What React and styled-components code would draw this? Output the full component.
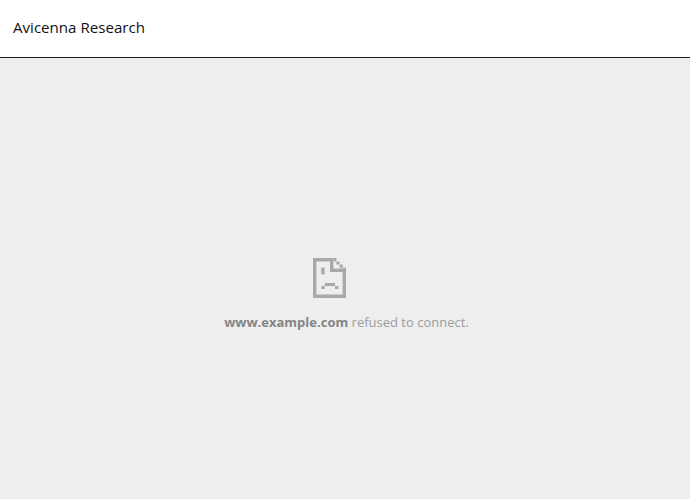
import React from "react";
import styled, { createGlobalStyle } from "styled-components";

const GlobalStyle = createGlobalStyle`
  html, body {
    margin: 0;
    padding: 0;
    height: 100%;
  }
  #root {
    height: 100%;
  }
`;

const Page = styled.div`
  display: flex;
  flex-direction: column;
  height: 499px;
  background: #fff;
  overflow: hidden;
`;

const Header = styled.header`
  display: flex;
  align-items: center;
  height: 58px;
  padding: 0 13px 3px;
  box-sizing: border-box;
  border-bottom: 1px solid #1c1c1c;
  background: #fff;
`;

const Title = styled.h1`
  margin: 0;
  font: 400 15.1px "Open Sans", sans-serif;
  color: #111;
`;

const Frame = styled.main`
  flex: 1;
  display: flex;
  flex-direction: column;
  align-items: center;
  padding: 200px 0 0 3px;
  background: #eeeeee;
`;

const IconSlot = styled.div`
  display: flex;
  margin-right: 34px;
`;

const Message = styled.p`
  margin: 15px 0 0;
  font: 400 13px "Open Sans", sans-serif;
  color: #9c9c9c;
  white-space: nowrap;

  strong {
    font-weight: 700;
    color: #858585;
  }
`;

const SadFileIcon = () => (
  <svg width="33" height="40" viewBox="0 0 33 40" fill="#a9a9a9">
    {/* sheet outline */}
    <path d="M0 0H20V3.4H3.4V36.4H29.6V11H33V40H0Z" />
    {/* folded corner */}
    <path d="M17 0H20.4V10.6H33V14H17Z" />
    <path d="M20.4 0H23.4V3.4H20.4ZM23.4 3.4H26.6V6.6H23.4ZM26.6 6.6H29.8V9.8H26.6ZM29.8 9.8H33V11H29.8Z" />
    {/* eye and mouth */}
    <path d="M8.2 9.6H11.6V16.4H8.2Z" />
    <path d="M11.8 25H22V28H11.8ZM8.4 28H11.8V31H8.4ZM22 28H25.4V31H22Z" />
  </svg>
);

export default function App() {
  return (
    <Page>
      <GlobalStyle />
      <Header>
        <Title>Avicenna Research</Title>
      </Header>
      <Frame>
        <IconSlot>
          <SadFileIcon />
        </IconSlot>
        <Message>
          <strong>www.example.com</strong> refused to connect.
        </Message>
      </Frame>
    </Page>
  );
}
